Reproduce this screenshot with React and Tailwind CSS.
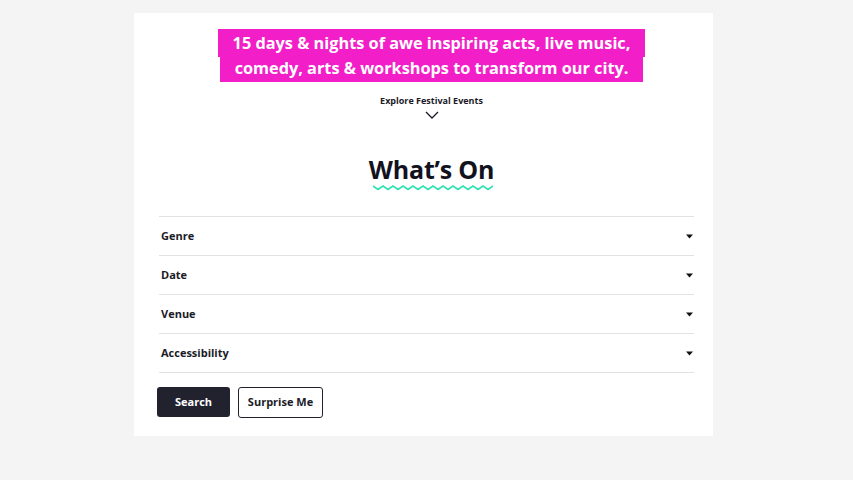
import React from "react";

const filters = ["Genre", "Date", "Venue", "Accessibility"];

// little filled caret for each dropdown row
const Caret = () => (
  <svg width="7" height="5" viewBox="0 0 7 5" className="mr-[1px]">
    <path d="M0 0.5h7L3.5 4.5z" fill="#111" />
  </svg>
);

// zig-zag underline under the heading
const Squiggle = () => {
  const pts = [];
  for (let i = 0; i <= 24; i++) {
    pts.push(`${i * 5},${i % 2 === 0 ? 1 : 4.5}`);
  }
  return (
    <svg width="120" height="6" viewBox="0 0 120 6" className="block">
      <polyline
        points={pts.join(" ")}
        fill="none"
        stroke="#2de3b1"
        strokeWidth="1.6"
      />
    </svg>
  );
};

const App = () => {
  return (
    <div
      className="min-h-screen w-full bg-[#f4f4f4] pt-[13px]"
      style={{ fontFamily: '"Open Sans", "Liberation Sans", sans-serif' }}
    >
      <div className="ml-[134px] w-[579px] h-[423px] bg-white">
        {/* HERO */}
        <div className="pl-[16px] pt-[18px] flex flex-col items-center">
          <p className="text-center text-[16.3px] font-bold leading-[25px] text-white">
            <span className="bg-[#f21fc8] px-[15px] py-[3px] box-decoration-clone">
              15 days &amp; nights of awe inspiring acts, live music,
              <br />
              comedy, arts &amp; workshops to transform our city.
            </span>
          </p>

          <p className="mt-[14px] text-[9px] font-bold text-[#1b1b28] leading-[12px]">
            Explore Festival Events
          </p>
          <svg width="14" height="8" viewBox="0 0 14 8" className="mt-[4px]">
            <path d="M1 1l6 6 6-6" fill="none" stroke="#1b1b28" strokeWidth="1.3" />
          </svg>

          <h2 className="mt-[37px] text-[25px] font-bold leading-[26px] text-[#12121f] tracking-[-0.2px]">
            What’s On
          </h2>
          <div className="mt-[3px] ml-[2px]">
            <Squiggle />
          </div>
        </div>

        {/* FILTERS */}
        <div className="mt-[25px] ml-[25px] w-[535px] border-t border-[#e2e2e2]">
          {filters.map((f) => (
            <div
              key={f}
              className="h-[39px] flex items-center justify-between border-b border-[#e2e2e2] pl-[2px]"
            >
              <span className="text-[11px] font-bold text-[#1b1b28]">{f}</span>
              <Caret />
            </div>
          ))}
        </div>

        {/* BUTTONS */}
        <div className="mt-[14px] ml-[23px] flex gap-[8px]">
          <button className="w-[73px] h-[30px] rounded-[3px] bg-[#22222f] text-white text-[11px] font-bold">
            Search
          </button>
          <button className="w-[85px] h-[31px] rounded-[3px] border border-[#22222f] bg-white text-[#1b1b28] text-[11px] font-bold">
            Surprise Me
          </button>
        </div>
      </div>
    </div>
  );
};

export default App;
